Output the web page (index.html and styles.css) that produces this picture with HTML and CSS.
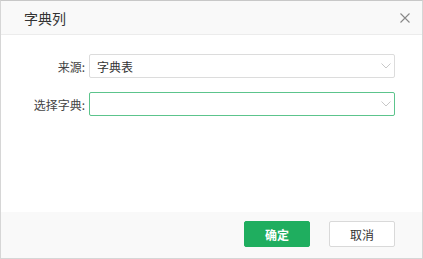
FILE: index.html
```html
<!DOCTYPE html>
<html lang="zh-CN">
<head>
<meta charset="utf-8">
<link rel="stylesheet" href="styles.css">
</head>
<body>
<div class="dialog">
  <div class="header">
    <span class="title">字典列</span>
    <svg class="close" width="10" height="10" viewBox="0 0 10 10"><path d="M0.5 0.5L9.5 9.5M9.5 0.5L0.5 9.5" stroke="#888" stroke-width="1.1" fill="none"/></svg>
  </div>
  <div class="body">
    <div class="row">
      <label class="label">来源:</label>
      <div class="select">
        <span class="value">字典表</span>
        <svg class="chev" width="10" height="6" viewBox="0 0 10 6"><path d="M0.5 0.5L5 5L9.5 0.5" stroke="#c8c8c8" stroke-width="1" fill="none"/></svg>
      </div>
    </div>
    <div class="row">
      <label class="label">选择字典:</label>
      <div class="select active">
        <span class="value"></span>
        <svg class="chev" width="10" height="6" viewBox="0 0 10 6"><path d="M0.5 0.5L5 5L9.5 0.5" stroke="#c8c8c8" stroke-width="1" fill="none"/></svg>
      </div>
    </div>
  </div>
  <div class="footer">
    <button class="btn primary">确定</button>
    <button class="btn">取消</button>
  </div>
</div>
</body>
</html>
```
FILE: styles.css
```css
html, body {
  margin: 0;
  padding: 0;
  background: #fff;
}
body {
  font-family: "Noto Sans CJK SC", "Noto Sans", sans-serif;
  color: #333;
}
.dialog {
  width: 423px;
  height: 259px;
  box-sizing: border-box;
  border: 1px solid #d6d6d6;
  border-top-color: #c8c8c8;
  display: flex;
  flex-direction: column;
  background: #fff;
}
.header {
  height: 33px;
  flex: none;
  background: #f9f9f9;
  border-bottom: 1px solid #ececec;
  display: flex;
  align-items: center;
  justify-content: space-between;
  padding: 0 12px 0 23px;
}
.title {
  font-size: 14px;
  color: #333;
  line-height: 1;
}
.close {
  display: block;
}
.body {
  flex: 1;
  padding: 19px 27px 0 0;
  display: flex;
  flex-direction: column;
  gap: 14px;
}
.row {
  display: grid;
  grid-template-columns: 84px 1fr;
  column-gap: 4px;
  align-items: center;
}
.label {
  text-align: right;
  font-size: 12px;
  color: #444;
}
.select {
  height: 24px;
  box-sizing: border-box;
  border: 1px solid #dcdcdc;
  border-radius: 2px;
  display: flex;
  align-items: center;
  justify-content: space-between;
  padding: 0 3px 0 7px;
  background: #fff;
}
.select.active {
  border-color: #5cc48c;
}
.value {
  font-size: 12px;
  color: #333;
}
.chev {
  display: block;
  margin-right: 0;
}
.footer {
  height: 46px;
  flex: none;
  background: #f9f9f9;
  display: flex;
  justify-content: flex-end;
  align-items: flex-start;
  gap: 19px;
  padding: 9px 27px 0 0;
  box-sizing: border-box;
}
.btn {
  width: 66px;
  height: 26px;
  box-sizing: border-box;
  border: 1px solid #d9d9d9;
  border-radius: 2px;
  background: #fff;
  font-family: inherit;
  font-size: 12px;
  color: #333;
  padding: 0;
}
.btn.primary {
  background: #1fae5f;
  border-color: #1fae5f;
  color: #fff;
  font-weight: bold;
}
```
